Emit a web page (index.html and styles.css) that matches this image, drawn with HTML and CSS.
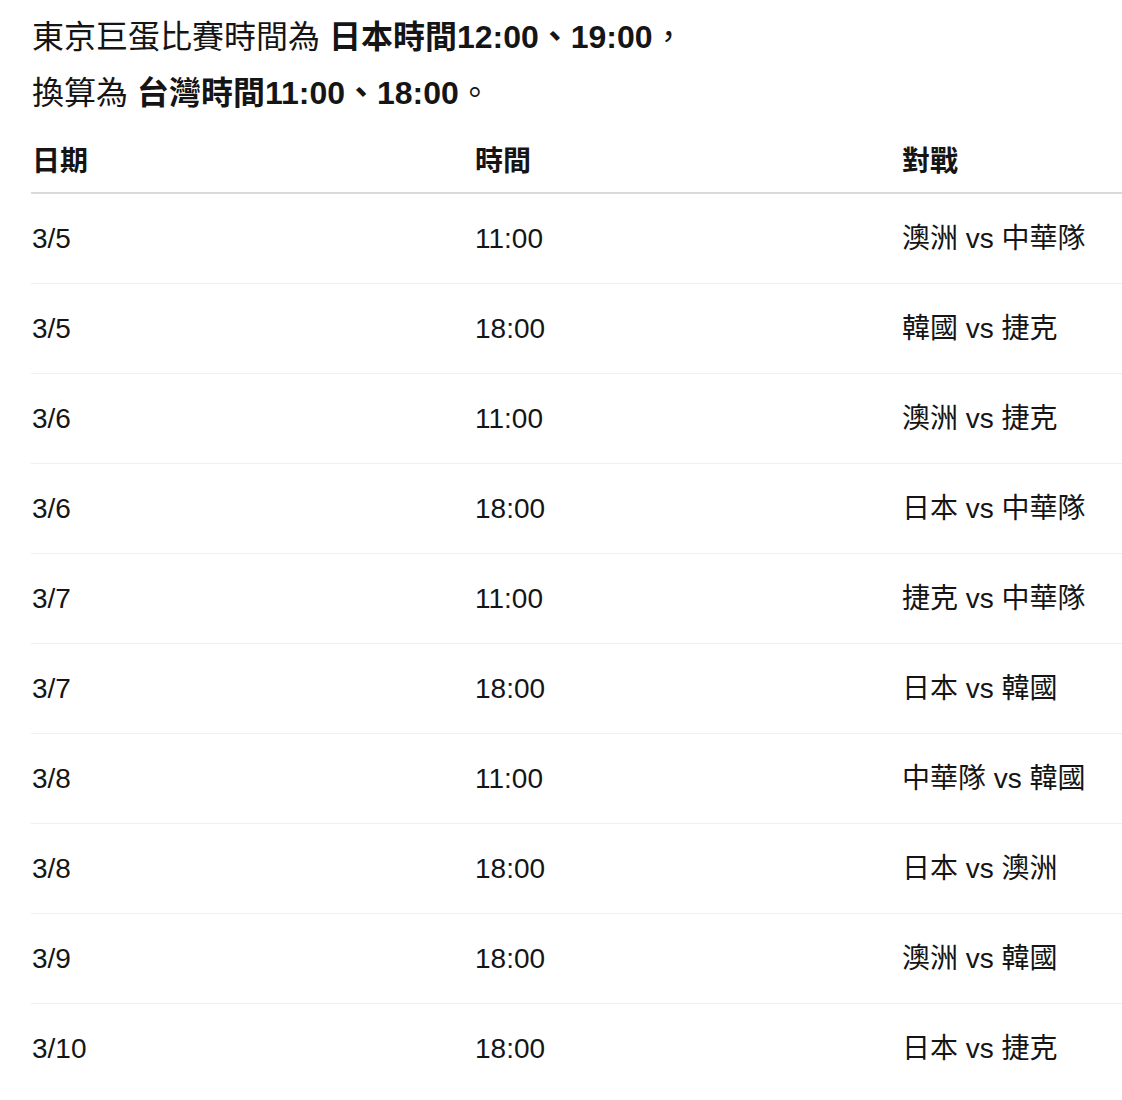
FILE: index.html
```html
<!DOCTYPE html>
<html lang="zh-Hant">
<head>
<meta charset="utf-8">
<title>東京巨蛋比賽時間</title>
<link rel="stylesheet" href="styles.css">
</head>
<body>
<div class="page">
  <p class="intro">東京巨蛋比賽時間為 <strong>日本時間12:00、19:00</strong>，<br>換算為 <strong>台灣時間11:00、18:00</strong>。</p>
  <table class="schedule">
    <colgroup>
      <col class="c-date">
      <col class="c-time">
      <col class="c-match">
    </colgroup>
    <thead>
      <tr><th>日期</th><th>時間</th><th>對戰</th></tr>
    </thead>
    <tbody>
      <tr><td>3/5</td><td>11:00</td><td>澳洲 vs 中華隊</td></tr>
      <tr><td>3/5</td><td>18:00</td><td>韓國 vs 捷克</td></tr>
      <tr><td>3/6</td><td>11:00</td><td>澳洲 vs 捷克</td></tr>
      <tr><td>3/6</td><td>18:00</td><td>日本 vs 中華隊</td></tr>
      <tr><td>3/7</td><td>11:00</td><td>捷克 vs 中華隊</td></tr>
      <tr><td>3/7</td><td>18:00</td><td>日本 vs 韓國</td></tr>
      <tr><td>3/8</td><td>11:00</td><td>中華隊 vs 韓國</td></tr>
      <tr><td>3/8</td><td>18:00</td><td>日本 vs 澳洲</td></tr>
      <tr><td>3/9</td><td>18:00</td><td>澳洲 vs 韓國</td></tr>
      <tr><td>3/10</td><td>18:00</td><td>日本 vs 捷克</td></tr>
    </tbody>
  </table>
</div>
</body>
</html>
```
FILE: styles.css
```css
html, body {
  margin: 0;
  padding: 0;
  background: #ffffff;
}

body {
  font-family: "Liberation Sans", "Noto Sans CJK TC", sans-serif;
  color: #151515;
}

.page {
  padding: 9px 0 0 31px;
}

.intro {
  margin: 0 0 0 1px;
  font-size: 32px;
  line-height: 56px;
}

.intro strong {
  font-weight: 700;
}

.schedule {
  width: 1091px;
  border-collapse: collapse;
  table-layout: fixed;
  font-size: 28px;
}

.c-date { width: 443px; }
.c-time { width: 427px; }

.schedule th {
  text-align: left;
  font-weight: 700;
  line-height: 42px;
  padding: 20px 0 9px 1px;
  border-bottom: 2px solid #dadada;
}

.schedule td {
  line-height: 42px;
  padding: 24px 0 23px 1px;
  border-bottom: 1px solid #efefef;
}

.schedule tbody tr:last-child td {
  border-bottom: none;
}
```
